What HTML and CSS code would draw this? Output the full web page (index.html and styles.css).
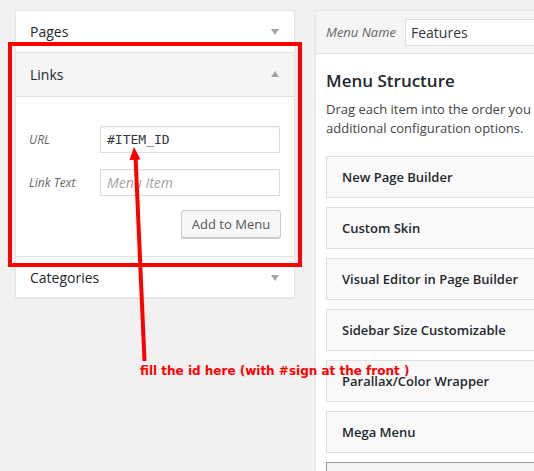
FILE: index.html
```html
<!DOCTYPE html>
<html>
<head>
<meta charset="utf-8">
<link rel="stylesheet" href="styles.css">
</head>
<body>
<div class="page">
  <div class="sidebar">
    <div class="box">
      <div class="sec-head">
        <span>Pages</span><span class="tri down"></span>
      </div>
      <div class="sec-head open">
        <span>Links</span><span class="tri up"></span>
      </div>
      <div class="sec-body">
        <div class="row">
          <label class="lbl">URL</label>
          <div class="input mono">#ITEM_ID</div>
        </div>
        <div class="row row2">
          <label class="lbl">Link Text</label>
          <div class="input ph">Menu Item</div>
        </div>
        <div class="actions">
          <button class="btn">Add to Menu</button>
        </div>
      </div>
      <div class="sec-head last">
        <span>Categories</span><span class="tri down"></span>
      </div>
    </div>
  </div>
  <div class="main">
    <div class="main-head">
      <label class="lbl">Menu Name</label>
      <div class="name-input">Features</div>
    </div>
    <div class="main-body">
      <h3>Menu Structure</h3>
      <p>Drag each item into the order you prefer. Click the arrow on the right of the item to reveal<br>additional configuration options.</p>
      <ul class="items">
        <li>New Page Builder</li>
        <li>Custom Skin</li>
        <li>Visual Editor in Page Builder</li>
        <li>Sidebar Size Customizable</li>
        <li>Parallax/Color Wrapper</li>
        <li>Mega Menu</li>
        <li class="dragging"></li>
      </ul>
    </div>
  </div>
</div>
<svg class="annot" width="534" height="471" viewBox="0 0 534 471">
  <rect x="10" y="44" width="290" height="221" fill="none" stroke="#ff0000" stroke-width="4"/>
  <line x1="144.5" y1="361" x2="135.5" y2="156" stroke="#ff0000" stroke-width="4"/>
  <polygon points="134,147 129.5,160 140.5,159.5" fill="#ff0000"/>
</svg>
<div class="note">fill the id here (with #sign at the front )</div>
</body>
</html>
```
FILE: styles.css
```css
html, body {
  margin: 0;
  padding: 0;
  background: #f1f1f1;
  width: 534px;
  height: 471px;
  overflow: hidden;
  font-family: "Open Sans", "DejaVu Sans", sans-serif;
  color: #23282d;
}
.page {
  display: flex;
  padding: 10px 0 0 15px;
  gap: 20px;
}
.sidebar {
  width: 280px;
  flex: none;
}
.box {
  background: #fff;
  border: 1px solid #e5e5e5;
  box-shadow: 0 1px 1px rgba(0,0,0,0.04);
}
.sec-head {
  height: 42px;
  display: flex;
  align-items: center;
  justify-content: space-between;
  padding: 0 14px 0 14px;
  font-size: 14px;
  border-bottom: 1px solid #e1e1e1;
  box-sizing: border-box;
}
.sec-head.open {
  background: #f5f5f5;
  height: 44px;
}
.sec-head.last {
  border-bottom: none;
  border-top: 1px solid #e1e1e1;
  height: 41px;
}
.tri {
  width: 0;
  height: 0;
  border-left: 4.5px solid transparent;
  border-right: 4.5px solid transparent;
  margin-right: 1px;
}
.tri.down { border-top: 6px solid #a0a5aa; margin-top: 1px; }
.tri.up { border-bottom: 6px solid #a0a5aa; margin-top: -1px; }
.sec-body {
  height: 159px;
  box-sizing: border-box;
  padding: 29px 13px 0 13px;
}
.row {
  display: flex;
  align-items: center;
}
.row2 { margin-top: 16px; }
.lbl {
  font-style: italic;
  font-size: 12px;
  color: #666;
  width: 71px;
  flex: none;
}
.input {
  width: 180px;
  height: 27px;
  box-sizing: border-box;
  border: 1px solid #ddd;
  background: #fff;
  font-size: 14px;
  padding: 0 6px;
  display: flex;
  align-items: center;
  box-shadow: inset 0 1px 2px rgba(0,0,0,0.05);
}
.mono {
  font-family: "DejaVu Sans Mono", "Liberation Mono", monospace;
  font-size: 13px;
  color: #32373c;
}
.ph {
  font-style: italic;
  color: #a0a5aa;
}
.actions {
  display: flex;
  justify-content: flex-end;
  margin-top: 14px;
}
.btn {
  font-family: "Open Sans", sans-serif;
  font-size: 13px;
  color: #555;
  background: #f7f7f7;
  border: 1px solid #ccc;
  border-radius: 3px;
  height: 28px;
  width: 100px;
  padding: 0;
  box-shadow: 0 1px 0 #ccc;
}
.main {
  flex: none;
  width: 260px;
  background: #fff;
  border: 1px solid #e5e5e5;
  border-right: none;
  min-height: 480px;
}
.main-head {
  height: 42px;
  background: #f5f5f5;
  border-bottom: 1px solid #dfdfdf;
  display: flex;
  align-items: center;
  padding-left: 10px;
}
.main-head .lbl {
  font-size: 13px;
  width: 79px;
}
.name-input {
  flex: 1;
  height: 27px;
  box-sizing: border-box;
  margin-top: 1px;
  border: 1px solid #ddd;
  border-right: none;
  background: #fff;
  font-size: 14px;
  padding-left: 5px;
  display: flex;
  align-items: center;
  color: #32373c;
  white-space: nowrap;
  overflow: hidden;
}
.main-body {
  padding: 14px 0 0 10px;
}
h3 {
  margin: 0;
  font-size: 17px;
  font-weight: 600;
  line-height: 26px;
  color: #23282d;
}
p {
  margin: 6px 0 0;
  font-size: 13px;
  line-height: 19px;
  color: #444;
  white-space: nowrap;
}
.items {
  list-style: none;
  margin: 18px 0 0;
  padding: 0;
}
.items li {
  height: 42px;
  box-sizing: border-box;
  border: 1px solid #dfdfdf;
  border-right: none;
  background: #f9f9f9;
  margin-bottom: 9px;
  display: flex;
  align-items: center;
  padding-left: 15px;
  font-size: 13px;
  font-weight: 600;
  color: #23282d;
  white-space: nowrap;
}
.items li.dragging {
  border-color: #999;
  background: #f5f5f5;
}
.annot {
  position: absolute;
  left: 0;
  top: 0;
  pointer-events: none;
}
.note {
  position: absolute;
  left: 140px;
  top: 364px;
  font-family: "DejaVu Sans", Verdana, sans-serif;
  font-weight: bold;
  font-size: 12px;
  line-height: 15px;
  color: #ff0000;
  white-space: nowrap;
}
```
